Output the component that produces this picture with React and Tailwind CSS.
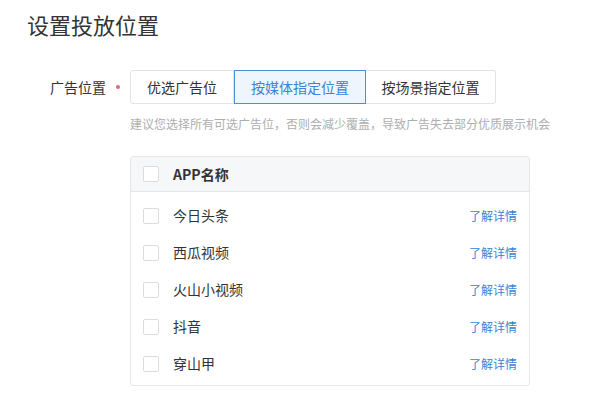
const FONT = { fontFamily: '"Noto Sans CJK SC", "Noto Sans", sans-serif' };

const apps = ["今日头条", "西瓜视频", "火山小视频", "抖音", "穿山甲"];

function Checkbox() {
  return <span className="w-[16px] h-[16px] border border-[#dcdcdc] rounded-[2px] bg-white shrink-0" />;
}

export default function App() {
  return (
    <div className="w-[612px] h-[403px] bg-white overflow-hidden text-[#333]" style={FONT}>
      <div className="pl-[27px] pt-[10px] text-[22px] leading-[28px] text-[#333]">设置投放位置</div>

      <div className="flex mt-[32px]">
        <div className="w-[130px] h-[34px] flex items-center justify-end text-[14px]">
          <span>广告位置</span>
          <span className="ml-[10px] mr-[10px] w-[4px] h-[4px] rounded-full bg-[#e8657a]" />
        </div>
        <div className="flex h-[34px] text-[14px]">
          <button className="w-[104px] h-full border border-[#e3e3e3] rounded-l-[3px] bg-white text-[#333]">
            优选广告位
          </button>
          <button className="w-[132px] h-full border border-[#4a8fd8] bg-[#eef5fd] text-[#3d82d4]">
            按媒体指定位置
          </button>
          <button className="w-[130px] h-full border border-l-0 border-[#e3e3e3] rounded-r-[3px] bg-white text-[#333]">
            按场景指定位置
          </button>
        </div>
      </div>

      <div className="mt-[12px] pl-[130px] text-[12px] leading-[16px] text-[#aeaeae]">
        建议您选择所有可选广告位，否则会减少覆盖，导致广告失去部分优质展示机会
      </div>

      <div className="ml-[130px] mt-[24px] w-[400px] border border-[#e6e6e6] rounded-[3px]">
        <div className="h-[35px] flex items-center pl-[12px] bg-[#f6f7f9] border-b border-[#e6e6e6] rounded-t-[3px]">
          <Checkbox />
          <span className="ml-[14px] text-[14px] font-bold text-[#333]">APP名称</span>
        </div>
        <div className="pt-[5px] pb-[3px]">
          {apps.map((name) => (
            <div key={name} className="h-[37px] flex items-center pl-[12px] pr-[12px]">
              <Checkbox />
              <span className="ml-[14px] text-[14px] text-[#333]">{name}</span>
              <span className="ml-auto text-[12px] text-[#3d82d4]">了解详情</span>
            </div>
          ))}
        </div>
      </div>
    </div>
  );
}
